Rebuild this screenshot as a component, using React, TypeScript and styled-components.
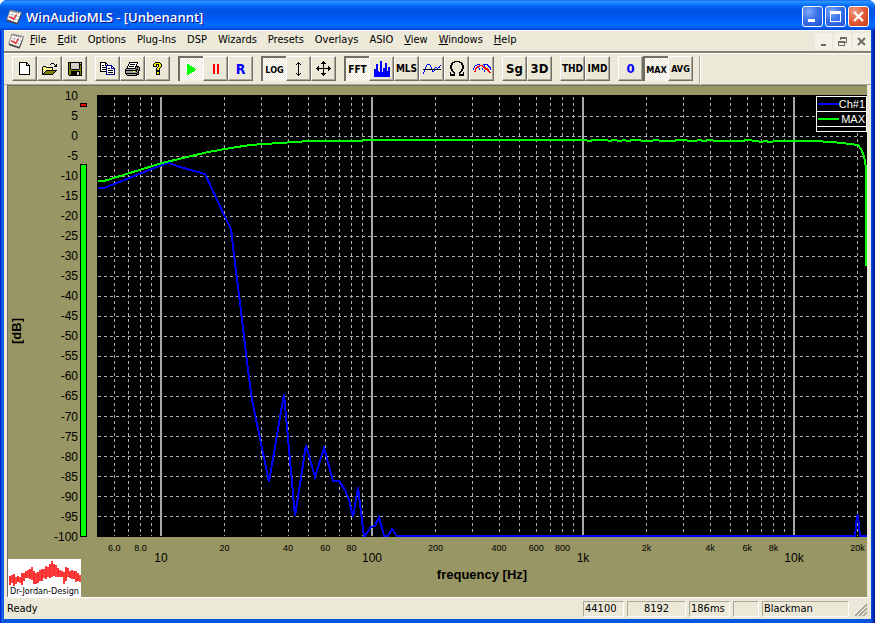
import React from "react";
import styled, { createGlobalStyle, css } from "styled-components";

const ui = `"DejaVu Sans Condensed", "Noto Sans", sans-serif`;
const arial = `"Liberation Sans", Arial, sans-serif`;
const face = "#ece9d8";
const olive = "#989664";

const GlobalStyle = createGlobalStyle`
  * { box-sizing: border-box; }
  body { margin: 0; background: #fff; }
  button { font: inherit; color: inherit; margin: 0; padding: 0; border: 0; background: none; }
`;

/* ---------- pixel icons ---------- */

const palette: Record<string, string> = {
  "#": "#000000",
  W: "#ffffff",
  y: "#f8f000",
  o: "#808000",
  n: "#000080",
  g: "#a0a0a0",
  d: "#808080",
  G: "#00ff00",
  r: "#ff0000",
  b: "#0000ff",
  l: "#d0d0c8",
};

function PixelIcon({ rows }: { rows: string[] }) {
  const width = Math.max(...rows.map((r) => r.length));
  return (
    <svg width={width} height={rows.length} viewBox={`0 0 ${width} ${rows.length}`} shapeRendering="crispEdges" aria-hidden="true">
      {rows.flatMap((row, y) =>
        (row.match(/(.)\1*/g) ?? []).reduce<{ x: number; out: React.ReactNode[] }>(
          (acc, run) => {
            const fill = palette[run[0]];
            if (fill) acc.out.push(<rect key={`${y}-${acc.x}`} x={acc.x} y={y} width={run.length} height={1} fill={fill} />);
            acc.x += run.length;
            return acc;
          },
          { x: 0, out: [] }
        ).out
      )}
    </svg>
  );
}

const newRows = [
  "########...",
  "#WWWWWW##..",
  "#WWWWWW#W#.",
  "#WWWWWW####",
  "#WWWWWWWWW#",
  "#WWWWWWWWW#",
  "#WWWWWWWWW#",
  "#WWWWWWWWW#",
  "#WWWWWWWWW#",
  "#WWWWWWWWW#",
  "#WWWWWWWWW#",
  "#WWWWWWWWW#",
  "###########",
];
const openRows = [
  ".........###....",
  "........#...#.#.",
  ".............##.",
  ".###........###.",
  "#yWy#######.....",
  "#WyWyWyWyW#.....",
  "#yWyWyWyWy#.....",
  "#WyW###########.",
  "#yW#ooooooooo#..",
  "#W#ooooooooo#...",
  "##ooooooooo#....",
  "###########.....",
];
const saveRows = [
  "##############",
  "#o#llllllll#l#",
  "#o#llllllll###",
  "#o#llllllll#o#",
  "#o#llllllll#o#",
  "#o#llllllll#o#",
  "#o#llllllll#o#",
  "#oo########oo#",
  "#oooooooooooo#",
  "#oo#########o#",
  "#oo######ll#o#",
  "#oo######ll#o#",
  "#oo######ll#o#",
  ".#############",
];
const copyRows = [
  "######.........",
  "#WWWW##........",
  "#WWWW#W#.......",
  "#W##W#nnnnnn...",
  "#WWWWWnWWWWnn..",
  "#W####nWWWWnWn.",
  "#WWWWWnW##Wnnnn",
  "#W####nWWWWWWWn",
  "#WWWWWnW#####Wn",
  "######nWWWWWWWn",
  "......nW#####Wn",
  "......nWWWWWWWn",
  "......nnnnnnnnn",
];
const printRows = [
  "....#########..",
  "....#WWWWWWW#..",
  "...#W#####W#...",
  "...#WWWWWWW#...",
  "..#W#####W####.",
  "..#WWWWWWW#g#g#",
  ".##########g#g#",
  "#gggggggggg##g#",
  "############g##",
  "#gggggggyyg#g#.",
  "#ggggggggggg##.",
  "############g#.",
  ".#ggggggggg###.",
  "..##########...",
];
const helpRows = [
  "..#####..",
  ".#yyyyy#.",
  "#yy###yy#",
  "#yy#.#yy#",
  "####.#yy#",
  "....#yy#.",
  "...#yy#..",
  "...#yy#..",
  "...####..",
  "...####..",
  "...#yy#..",
  "...#yy#..",
  "...####..",
];
const playRows = [
  "GG.......",
  "GGG......",
  "GGGGG....",
  "GGGGGGG..",
  "GGGGGGGG.",
  "GGGGGGGGG",
  "GGGGGGGG.",
  "GGGGGGG..",
  "GGGGG....",
  "GGG......",
  "GG.......",
];
const pauseRows = Array(10).fill("rr..rr") as string[];
const updownRows = [
  "...#...",
  "..###..",
  ".#.#.#.",
  "...#...",
  "...#...",
  "...#...",
  "...#...",
  "...#...",
  "...#...",
  "...#...",
  "...#...",
  ".#.#.#.",
  "..###..",
  "...#...",
];
const moveRows = [
  ".......#.......",
  "......###......",
  ".....#####.....",
  ".......#.......",
  ".......#.......",
  "..#....#....#..",
  ".##....#....##.",
  "###############",
  ".##....#....##.",
  "..#....#....#..",
  ".......#.......",
  ".......#.......",
  ".....#####.....",
  "......###......",
  ".......#.......",
];
const barsRows = [
  "......bb........",
  "......bb........",
  "......bb...bb...",
  "..bb..bb...bb...",
  "..bb..bb...bb...",
  "..bb..bb...bb...",
  "..bb..bb...bb.bb",
  "..bb..bb.bbbb.bb",
  "bbbb..bb.bbbb.bb",
  "bbbb..bb.bbbb.bb",
  "bbbbb.bb.bbbbbbb",
  "bbbbbbbbbbbbbbbb",
  "bbbbbbbbbbbbbbbb",
  "bbbbbbbbbbbbbbbb",
  "bbbbbbbbbbbbbbbb",
  "bbbbbbbbbbbbbbbb",
];
const omegaRows = [
  "....######....",
  "..###....###..",
  ".##........##.",
  ".##........##.",
  "##..........##",
  "##..........##",
  "##..........##",
  "##..........##",
  ".##........##.",
  ".##........##.",
  "..##......##..",
  "#..##....##..#",
  "#...#....#...#",
  "#####....#####",
  "#####....#####",
];
const waveRows = [
  "....bbb...........",
  "...b...b.........b",
  "...b...b........b.",
  "..b.....b...bb.bb.",
  "..b.....b..b..b...",
  "##################",
  ".b.......b.b......",
  ".b.......bb.......",
  "b.................",
  "b.................",
];
const humpsRows = [
  "....bbb...bbbbb...",
  "..bb..rrrr.b..bb..",
  ".b..rrr..rrb...bb.",
  ".b.rrb....rrr...bb",
  "b.rr..b..b.rrrr..b",
  "b.r...b..b..rrrr.b",
  "..r........b..rr..",
  ".rr........b...rr.",
  "................rr",
];

function AppIcon() {
  return (
    <svg width="16" height="16" viewBox="0 0 16 16" aria-hidden="true">
      <path d="M4 1 L15.5 3.5 L11.5 14.5 L0.8 10.5 Z" fill="#fff" stroke="#777" strokeWidth="0.8" />
      <path d="M15.5 3.5 L15 6.5 L11.5 15.8 L1 12.2 L0.8 10.5 L11 14 Z" fill="#444" />
      <path d="M4.5 2 L14.2 4.2" stroke="#555" strokeWidth="1.6" strokeDasharray="1 1" />
      <path d="M3.5 5 L13 7.5 M2.5 8 L12 11 M7 4 L4.5 11 M11 5 L8.5 12.5" stroke="#aaa" strokeWidth="0.7" />
      <path d="M3 7.8 L6 8.8 L7.5 10.5 L10.5 5.5" fill="none" stroke="#f02020" strokeWidth="1.3" />
    </svg>
  );
}

/* ---------- window chrome ---------- */

const Window = styled.div`
  display: flex;
  flex-direction: column;
  min-height: 100vh;
  border-radius: 7px 7px 0 0;
  overflow: hidden;
  background: linear-gradient(90deg, #0019cf 0, #0831d9 1px, #166aee 2px, #0855dd 4px, #0855dd calc(100% - 4px), #0441d8 calc(100% - 3px), #001ea0 calc(100% - 1px), #00138c 100%);
  font: 11px ${ui};
  color: #000;
`;
const TitleBar = styled.header`
  display: flex;
  align-items: center;
  height: 30px;
  padding: 3px 6px 0;
  gap: 4px;
  background: linear-gradient(#0058ee 0, #3593ff 1px, #288eff 2px, #127dff 4px, #036ffc 5px, #0262ee 7px, #0057e5 9px, #0054e3 13px, #005bf5 19px, #026afe 24px, #0066ff 27px, #0040cd 30px);
`;
const Title = styled.h1`
  flex: 1;
  margin: 0;
  font: 600 13px "Open Sans", "Noto Sans", sans-serif;
  line-height: 20px;
  color: #fff;
  text-shadow: 1px 1px #0f1089;
`;
const CaptionButtons = styled.div`
  display: flex;
  gap: 2px;
`;
const CaptionButton = styled.button<{ $close?: boolean }>`
  width: 21px;
  height: 21px;
  border: 1px solid #fff;
  border-radius: 3px;
  display: grid;
  place-items: center;
  background: ${(p) =>
    p.$close
      ? "radial-gradient(circle at 30% 25%, #f0a088, #e35f3e 45%, #c83a14)"
      : "radial-gradient(circle at 30% 25%, #7fa8f8, #3c72e8 45%, #1c4fd8)"};
`;
const Client = styled.div`
  flex: 1;
  display: flex;
  flex-direction: column;
  margin: 0 4px 4px;
  background: ${face};
`;
const MenuBar = styled.nav`
  display: flex;
  align-items: center;
  gap: 1px;
  height: 21px;
  padding: 0 1px 0 4px;
  border-top: 1px solid #fff;
`;
const MenuItem = styled.button`
  padding: 0 5px 2px;
  line-height: 18px;
`;
const MdiButtons = styled.div`
  margin-left: auto;
  display: flex;
  gap: 2px;
`;
const MdiButton = styled.button`
  width: 17px;
  height: 17px;
  background: #f3f1e8;
  display: grid;
  place-items: center;
`;
const Toolbar = styled.div`
  display: flex;
  height: 34px;
  padding: 3px 8px;
  border-top: 2px solid #858070;
  border-bottom: 1px solid #aca899;
  box-shadow: inset 0 1px #fff;
`;
const ToolGroup = styled.div`
  display: flex;
  margin-right: 8px;
`;
const raised = css`
  border: 1px solid;
  border-color: #fff #716f64 #716f64 #fff;
  box-shadow: inset -1px -1px #aca899;
`;
const pressed = css`
  border: solid #716f64;
  border-width: 2px 0 0 2px;
  background: repeating-conic-gradient(#fff 0 25%, ${face} 0 50%) 0 0 / 2px 2px;
`;
const ToolButton = styled.button<{ $on?: boolean; $size?: number; $color?: string }>`
  width: 25px;
  height: 25px;
  display: flex;
  align-items: center;
  justify-content: center;
  white-space: nowrap;
  font: 700 ${(p) => p.$size ?? 10}px ${ui};
  color: ${(p) => p.$color ?? "#000"};
  ${(p) => (p.$on ? pressed : raised)}
`;
const ToolEnd = styled.div`
  width: 2px;
  margin-left: -2px;
  height: 29px;
  border-left: 1px solid #aca899;
  border-right: 1px solid #fff;
`;

/* ---------- analyser view ---------- */

const View = styled.main`
  flex: 1;
  display: grid;
  grid-template-columns: 18px 50px 7px minmax(0, 1fr);
  grid-template-rows: 1fr 60px;
  column-gap: 2px;
  margin: 0 4px 0 3px;
  border-left: 1px solid #716f64;
  border-top: 1px solid #716f64;
  background: ${olive};
  font-family: ${arial};
`;
const AxisTitleY = styled.div`
  writing-mode: vertical-rl;
  transform: rotate(180deg);
  align-self: center;
  justify-self: center;
  font-weight: 700;
  font-size: 13px;
  line-height: 20px;
  margin-bottom: -38px;
`;
const ScaleY = styled.div`
  display: flex;
  flex-direction: column;
  justify-content: space-between;
  margin-bottom: -10px;
  text-align: right;
  font-size: 12px;
  line-height: 20px;
`;
const Meter = styled.div`
  display: flex;
  flex-direction: column;
  justify-content: space-between;
  padding-top: 9px;
`;
const Clip = styled.div`
  height: 4px;
  margin-top: 8px;
  border: 1px solid #000;
  background: #f00;
`;
const Level = styled.div`
  height: 84.4%;
  border: 1px solid #000;
  background: #0f0;
`;
const Plot = styled.figure`
  position: relative;
  margin: 9px 0 0 8px;
  min-height: 300px;
  background: #000;
`;
const Trace = styled.svg`
  position: absolute;
  inset: 0;
  width: 100%;
  height: 100%;
`;
const Legend = styled.figcaption`
  position: absolute;
  top: 1px;
  right: 0;
  width: 51px;
  border: 1px solid #fff;
  background: #000;
  color: #fff;
  font-size: 11px;
  line-height: 14px;
`;
const LegendRow = styled.div<{ $color: string }>`
  display: flex;
  align-items: center;
  justify-content: space-between;
  height: 15px;
  padding: 0 1px;
  border-bottom: 1px solid #fff;
  &::before {
    content: "";
    width: 21px;
    height: 2px;
    background: ${(p) => p.$color};
  }
`;
const LegendBlank = styled.div`
  height: 4px;
`;
const ScaleX = styled.div`
  grid-column: 4;
  grid-row: 2;
  margin-left: 8px;
`;
const Ticks = styled.svg`
  display: block;
  width: 100%;
  height: 29px;
  overflow: visible;
`;
const AxisTitleX = styled.div`
  text-align: center;
  font-size: 13px;
  font-weight: 700;
  line-height: 18px;
`;
const Logo = styled.div`
  grid-column: 1 / 4;
  grid-row: 2;
  align-self: end;
  width: 73px;
  height: 38px;
  background: #fff;
  font: 9px/11px ${ui};
  text-align: center;
  white-space: nowrap;
  svg { display: block; }
`;

/* ---------- status bar ---------- */

const StatusBar = styled.footer`
  display: flex;
  align-items: center;
  gap: 3px;
  height: 22px;
  padding: 0 3px;
  border-top: 1px solid #fff;
  line-height: 14px;
`;
const Ready = styled.div`
  flex: 1;
`;
const Pane = styled.div<{ $w: number; $center?: boolean }>`
  width: ${(p) => p.$w}px;
  height: 16px;
  padding: 0 1px;
  border: 1px solid;
  border-color: #aca899 #fff #fff #aca899;
  text-align: ${(p) => (p.$center ? "center" : "left")};
`;

const decade = 211;
const xOf = (f: number) => 64 + decade * Math.log10(f / 10);
const yOf = (db: number) => 41.5 - 4 * db;

const maxCurve =
  "1,86 7,86 65,68 109,57.5 128,54 153,50 183,48 213,46 265,46 266,45 488,45 492,46 497,45 510,45 512,46 517,45 523,46 527,45 531,46 536,45 552,46 560,45 564,46 576,46 581,45 598,46 602,45 607,46 612,45 620,46 645,46 650,45 660,46 664,47 668,46 673,47 680,46 718,46 733,47 746,48 752,49 761,50 764,54 767,61 769,73 769,171";
const channelCurve =
  "1,93 7,93 65,70 72,68 83,72 108,79 128,122 134,134 137,160 143,208 151,275 155,305 172,387 187,299 198,421 209,350 218,382 227,353 236,386 242,386 248,395 252,405 256,422 261,392 267,442 274,432 278,431 282,422 287,441 291,441 295,434 300,441 758,441 760,421 761,421 763,441 770,441";

const levels = Array.from({ length: 23 }, (_, i) => 10 - 5 * i);
const minorLines = [6, 7, 8, 9].concat(
  [10, 100, 1000].flatMap((d) => [2, 3, 4, 5, 6, 7, 8, 9].map((n) => n * d)),
  [20000]
);
const minorTicks: [number, string][] = [
  [6, "6.0"], [8, "8.0"], [20, "20"], [40, "40"], [60, "60"], [80, "80"],
  [200, "200"], [400, "400"], [600, "600"], [800, "800"],
  [2000, "2k"], [4000, "4k"], [6000, "6k"], [8000, "8k"], [20000, "20k"],
];
const majorTicks: [number, string][] = [[10, "10"], [100, "100"], [1000, "1k"], [10000, "10k"]];
const percent = (f: number) => `${(xOf(f) / 770) * 100}%`;

type Tool = { label: string; icon?: string[]; on?: boolean; size?: number; color?: string };
const tools: Tool[][] = [
  [{ label: "New", icon: newRows }, { label: "Open", icon: openRows }, { label: "Save", icon: saveRows }],
  [{ label: "Copy", icon: copyRows }, { label: "Print", icon: printRows }, { label: "About", icon: helpRows }],
  [{ label: "Run", icon: playRows, on: true }, { label: "Pause", icon: pauseRows }, { label: "R", size: 14, color: "#00f" }],
  [{ label: "LOG", on: true, size: 9 }, { label: "Vertical zoom", icon: updownRows }, { label: "Move", icon: moveRows }],
  [
    { label: "FFT", on: true },
    { label: "Spectrum", icon: barsRows },
    { label: "MLS" },
    { label: "Oscilloscope", icon: waveRows },
    { label: "Impedance", icon: omegaRows },
    { label: "Overlay", icon: humpsRows },
  ],
  [{ label: "Sg", size: 13 }, { label: "3D", size: 13 }],
  [{ label: "THD" }, { label: "IMD" }],
  [{ label: "0", size: 13, color: "#00f" }, { label: "MAX", on: true, size: 9 }, { label: "AVG", size: 9 }],
];

const menus: [string, boolean][] = [
  ["File", true], ["Edit", true], ["Options", false], ["Plug-Ins", false], ["DSP", false], ["Wizards", false],
  ["Presets", false], ["Overlays", false], ["ASIO", false], ["View", true], ["Windows", true], ["Help", true],
];

const logoBars = [
  [1, 17, 9], [3, 16, 8], [5, 15, 12], [7, 18, 7], [9, 17, 6], [11, 18, 6], [13, 14, 12], [15, 14, 8],
  [17, 12, 7], [19, 11, 8], [21, 10, 10], [23, 8, 13], [25, 12, 13], [27, 14, 11], [29, 13, 11], [31, 11, 11],
  [33, 10, 12], [35, 10, 9], [37, 7, 13], [39, 8, 10], [41, 5, 14], [43, 2, 16], [45, 5, 12], [47, 6, 12],
  [49, 9, 9], [51, 11, 7], [53, 12, 6], [55, 13, 12], [57, 8, 14], [59, 9, 9], [61, 12, 7], [63, 11, 9],
  [65, 12, 8], [67, 12, 11], [69, 14, 8], [71, 16, 7],
];

export default function App() {
  return (
    <Window>
      <GlobalStyle />
      <TitleBar>
        <AppIcon />
        <Title>WinAudioMLS - [Unbenannt]</Title>
        <CaptionButtons>
          <CaptionButton aria-label="Minimize">
            <svg width="13" height="13"><path d="M2 9h7v3H2z" fill="#fff" /></svg>
          </CaptionButton>
          <CaptionButton aria-label="Maximize">
            <svg width="13" height="13" shapeRendering="crispEdges"><path d="M1 1h11v11H1zM2 4v7h9V4z" fillRule="evenodd" fill="#fff" /></svg>
          </CaptionButton>
          <CaptionButton $close aria-label="Close">
            <svg width="13" height="13"><path d="M2 2l9 9M11 2l-9 9" stroke="#fff" strokeWidth="2.3" /></svg>
          </CaptionButton>
        </CaptionButtons>
      </TitleBar>

      <Client>
        <MenuBar>
          <AppIcon />
          {menus.map(([name, mnemonic]) => (
            <MenuItem key={name}>{mnemonic ? <><u>{name[0]}</u>{name.slice(1)}</> : name}</MenuItem>
          ))}
          <MdiButtons>
            <MdiButton aria-label="Minimize document">
              <svg width="9" height="9"><path d="M2 7h5v2H2z" fill="#6f6d62" /></svg>
            </MdiButton>
            <MdiButton aria-label="Restore document">
              <svg width="9" height="9" shapeRendering="crispEdges">
                <path d="M2 0h7v6H7V5h1V2H3v1H2zM0 4h7v5H0zM1 6v2h5V6z" fillRule="evenodd" fill="#6f6d62" />
              </svg>
            </MdiButton>
            <MdiButton aria-label="Close document">
              <svg width="9" height="9"><path d="M1 1l7 7M8 1l-7 7" stroke="#6f6d62" strokeWidth="2" /></svg>
            </MdiButton>
          </MdiButtons>
        </MenuBar>

        <Toolbar role="toolbar">
          {tools.map((group, i) => (
            <ToolGroup key={i}>
              {group.map((t) => (
                <ToolButton key={t.label} $on={t.on} $size={t.size} $color={t.color} aria-label={t.label} aria-pressed={t.on}>
                  {t.icon ? <PixelIcon rows={t.icon} /> : t.label}
                </ToolButton>
              ))}
            </ToolGroup>
          ))}
          <ToolEnd />
        </Toolbar>

        <View>
          <AxisTitleY>[dB]</AxisTitleY>
          <ScaleY>
            {levels.map((db) => <span key={db}>{db}</span>)}
          </ScaleY>
          <Meter>
            <Clip />
            <Level />
          </Meter>
          <Plot>
            <Trace viewBox="0 0 770 442" preserveAspectRatio="none" shapeRendering="crispEdges" role="img" aria-label="Frequency response">
              <g stroke="#b0b0b0" strokeDasharray="3 3">
                {levels.slice(1, -1).map((db) => <line key={db} x1="1" x2="769" y1={yOf(db)} y2={yOf(db)} />)}
                {minorLines.map((f, i) => {
                  const x = Math.floor(xOf(f)) + 0.5;
                  return <line key={i} x1={x} x2={x} y1="2" y2="441" />;
                })}
              </g>
              <g stroke="#a8a8a8" strokeWidth="2">
                {majorTicks.map(([f]) => <line key={f} x1={xOf(f)} x2={xOf(f)} y1="2" y2="441" />)}
              </g>
              <polyline points={channelCurve} fill="none" stroke="#0000ff" strokeWidth="2" />
              <polyline points={maxCurve} fill="none" stroke="#00ff00" strokeWidth="2" />
            </Trace>
            <Legend>
              <LegendRow $color="#00f">Ch#1</LegendRow>
              <LegendRow $color="#0f0">MAX</LegendRow>
              <LegendBlank />
            </Legend>
          </Plot>
          <Logo>
            <svg width="73" height="27" shapeRendering="crispEdges" aria-hidden="true">
              {logoBars.map(([x, y, h]) => <rect key={x} x={x} y={y} width="2" height={h} fill={x % 4 === 1 ? "#ff3030" : "#f84040"} />)}
            </svg>
            Dr-Jordan-Design
          </Logo>
          <ScaleX>
            <Ticks>
              <g textAnchor="middle" fontSize="9">
                {minorTicks.map(([f, label]) => <text key={f} x={percent(f)} y="14">{label}</text>)}
              </g>
              <g textAnchor="middle" fontSize="12">
                {majorTicks.map(([f, label]) => <text key={f} x={percent(f)} y="25">{label}</text>)}
              </g>
            </Ticks>
            <AxisTitleX>frequency [Hz]</AxisTitleX>
          </ScaleX>
        </View>

        <StatusBar>
          <Ready>Ready</Ready>
          <Pane $w={41}>44100</Pane>
          <Pane $w={59} $center>8192</Pane>
          <Pane $w={41}>186ms</Pane>
          <Pane $w={26} />
          <Pane $w={87}>Blackman</Pane>
          <svg width="16" height="14" aria-hidden="true">
            <path d="M3 14L15 2M7 14L15 6M11 14L15 10" stroke="#aca899" strokeWidth="2" />
            <path d="M2 13L14 1M6 13L14 5M10 13L14 9" stroke="#fff" />
          </svg>
        </StatusBar>
      </Client>
    </Window>
  );
}
